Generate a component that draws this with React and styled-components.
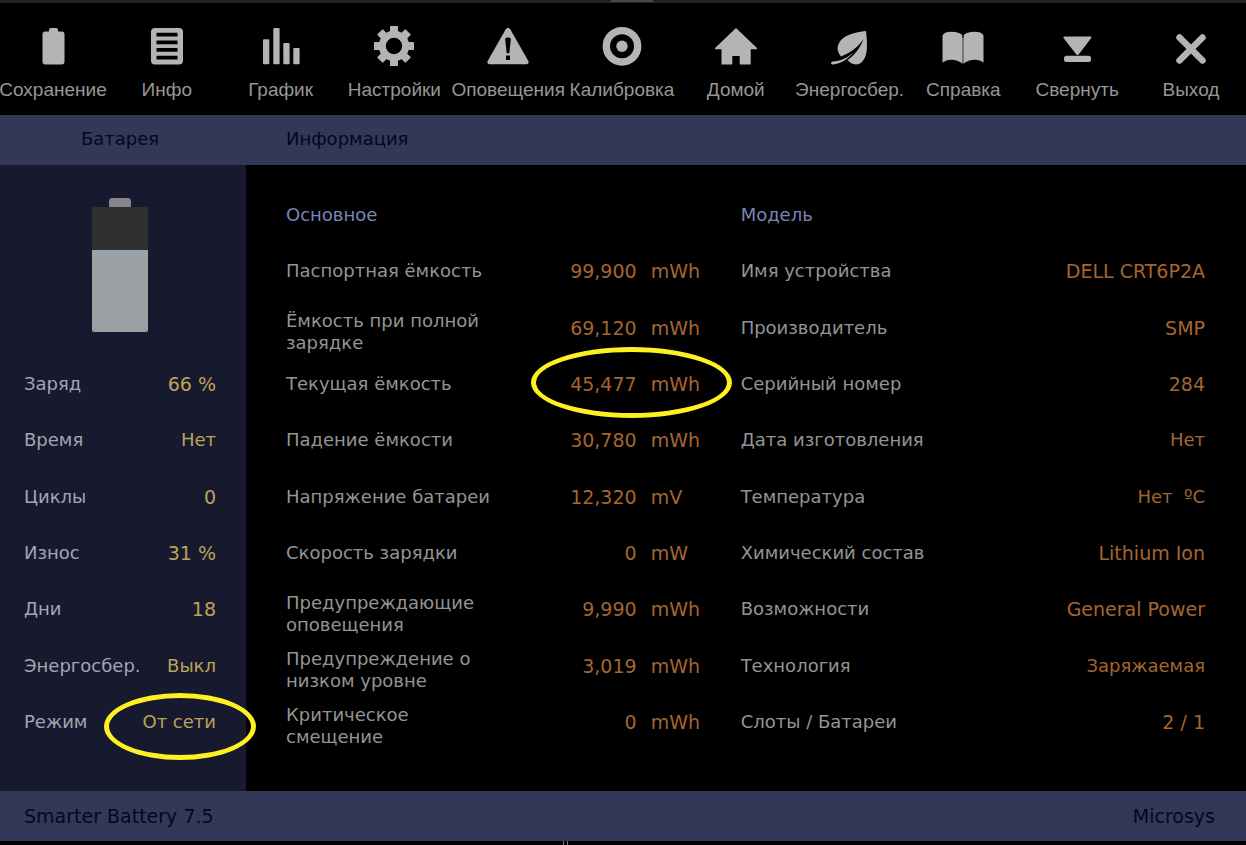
import React from "react";
import styled, { createGlobalStyle } from "styled-components";

const GlobalStyle = createGlobalStyle`
  * { box-sizing: border-box; }
  body {
    margin: 0;
    background: #000;
    color: #949494;
    font-family: "DejaVu Sans", sans-serif;
    font-size: 18px;
    line-height: 22px;
  }
`;

const Page = styled.div`
  display: flex;
  flex-direction: column;
  min-height: 100vh;
`;

const TopEdge = styled.div`
  display: flex;
  justify-content: center;
  height: 3px;
  background: #222;
`;

const Grip = styled.div`
  width: 42px;
  height: 2px;
  margin-left: 18px;
  background: #484848;
`;

const Toolbar = styled.nav`
  display: grid;
  grid-template-columns: repeat(11, 106px);
  justify-content: space-between;
  height: 112px;
  padding: 23px 2px 0 0;
`;

const ToolButton = styled.button`
  display: flex;
  flex-direction: column;
  align-items: center;
  gap: 10px;
  padding: 0;
  border: 0;
  background: none;
  color: #969696;
  font-family: "Liberation Sans", Arial, sans-serif;
  font-size: 19px;
  line-height: 24px;
  white-space: nowrap;
  cursor: pointer;
`;

const Icon = styled.svg`
  flex: none;
  width: 42px;
  height: 42px;
  fill: #b4b4b4;
  stroke: none;
`;

const TitleBar = styled.header`
  display: flex;
  align-items: center;
  height: 50px;
  padding-bottom: 2px;
  background: #333859;
  color: #04071f;
`;

const BarTitle = styled.h1`
  margin: 0;
  font-size: inherit;
  font-weight: 400;
`;

const SideTitle = styled(BarTitle)`
  width: 246px;
  padding: 0 30px 0 24px;
  text-align: center;
`;

const MainTitle = styled(BarTitle)`
  padding-left: 40px;
`;

const Body = styled.div`
  display: flex;
  flex: 1;
`;

const Sidebar = styled.aside`
  display: grid;
  grid-template-rows: 3fr 7fr;
  flex: none;
  width: 246px;
  padding: 22px 30px 41px 24px;
  background: #171a2e;
`;

const BatteryArea = styled.div`
  display: flex;
  flex-direction: column;
  align-items: center;
  padding-top: 11px;
`;

const BatteryCap = styled.div`
  width: 22px;
  height: 9px;
  border-radius: 3px 3px 0 0;
  background: #85838c;
`;

const BatteryShell = styled.div`
  display: flex;
  align-items: flex-end;
  width: 56px;
  height: 125px;
  border-radius: 2px;
  background: #303030;
  overflow: hidden;
`;

const BatteryFill = styled.div`
  width: 100%;
  background: linear-gradient(#97a5ae, #9b9fa1 12px);
`;

const Table = styled.table`
  display: grid;
  flex: ${(p) => p.$grow || 1} 0 0;
  grid-template-rows: ${(p) => (p.$titled ? "1fr 9fr" : "1fr")};
  min-width: 0;
`;

const Caption = styled.caption`
  display: flex;
  align-items: center;
  color: #7884b8;
`;

const Rows = styled.tbody`
  display: grid;
  grid-auto-rows: 1fr;
`;

const Row = styled.tr`
  display: flex;
  align-items: center;
  min-height: 46px;
`;

const Label = styled.th`
  flex: 1 0 0;
  padding: ${(p) => (p.$wrapped ? "9px 0 0" : "0")};
  font-weight: 400;
  text-align: left;
`;

const SideLabel = styled(Label)`
  color: #a3a5b2;
  white-space: nowrap;
`;

const Value = styled.td`
  position: relative;
  padding: 0;
  color: ${(p) => (p.$side ? "#bda258" : "#a5652f")};
  font-size: ${(p) => (p.$word ? 18 : 19)}px;
  text-align: right;
  white-space: pre;
`;

const Amount = styled.span`
  display: inline-block;
`;

const Unit = styled.span`
  display: inline-block;
  width: 50px;
  margin-left: 14px;
  text-align: left;
`;

const Ring = styled.span`
  position: absolute;
  top: ${(p) => p.$top}px;
  right: ${(p) => p.$right}px;
  width: ${(p) => p.$width}px;
  height: ${(p) => p.$height}px;
  border: 5px solid #fff021;
  border-radius: 50%;
  pointer-events: none;
  z-index: 1;
`;

const Main = styled.main`
  display: flex;
  flex: 1;
  gap: 40px;
  padding: 22px 41px 41px 40px;
`;

const LabelBox = styled.div`
  max-width: 220px;
`;

const Footer = styled.footer`
  display: flex;
  align-items: center;
  justify-content: space-between;
  height: 50px;
  padding: 0 31px 1px 24px;
  background: #333859;
  color: #04071f;
  font-size: 19px;
`;

const BottomEdge = styled.div`
  display: flex;
  height: 4px;
  padding-left: 45%;
`;

const Ticks = styled.div`
  width: 5px;
  margin-left: 2px;
  border: solid #777;
  border-width: 0 1px;
`;

const icons = {
  save: (
    <path d="M17 5.5V4a2 2 0 0 1 2-2h5a2 2 0 0 1 2 2v1.5h3.5a3 3 0 0 1 3 3v27a3 3 0 0 1-3 3h-16a3 3 0 0 1-3-3v-27a3 3 0 0 1 3-3z" />
  ),
  info: (
    <path
      fillRule="evenodd"
      d="M9 2h24a4 4 0 0 1 4 4v28.500a4 4 0 0 1-4 4H9a4 4 0 0 1-4-4V6a4 4 0 0 1 4-4zM10.500 6.700v3.800h21V6.700zM10.500 14.400v3.800h21v-3.800zM10.500 22v3.800h21V22zM10.500 29.700v3.800h21v-3.800z"
    />
  ),
  chart: (
    <>
      <rect x="3" y="13.300" width="6.300" height="25" rx="1" />
      <rect x="13.300" y="2" width="6.300" height="36.300" rx="1" />
      <rect x="23.300" y="17" width="6.300" height="21.300" rx="1" />
      <rect x="33.300" y="22" width="6.300" height="16.300" rx="1" />
    </>
  ),
  gear: (
    <>
      <circle cx="21" cy="20" r="11.700" fill="none" stroke="#b4b4b4" strokeWidth="7" />
      {[0, 45, 90, 135, 180, 225, 270, 315].map((a) => (
        <path key={a} transform={`rotate(${a} 21 20)`} d="M17.500 0q-.5 0-.5.500V8h8V.5q0-.5-.5-.5z" />
      ))}
    </>
  ),
  alert: (
    <path
      fillRule="evenodd"
      d="M18.700 3.300q2.300-3 4.600 0L41.300 35q1.200 3.300-1.800 3.300h-37q-3 0-1.800-3.300zM18.200 13.500q0-2 1.800-2h2q1.800 0 1.800 2L22.300 27.300h-2.600zM19 29.500h4V34h-4z"
    />
  ),
  target: (
    <>
      <circle cx="21" cy="20.300" r="15.700" fill="none" stroke="#b4b4b4" strokeWidth="7.400" />
      <circle cx="21" cy="20.300" r="5.700" />
    </>
  ),
  home: <path d="M21 2 42 22v1.200h-6.300v15.300H24.700V30h-7.400v8.500H6.500V23.200H0V22z" />,
  leaf: (
    <>
      <path d="M37 5C26 6 14 9 10 17c-2.500 5-1.500 9 2 13.500C21 27 28.500 22 34.500 13 31 23 25 29.500 18.500 34c3 4 8 5.500 12.500 3.500C39.500 32 38.500 19 37 5z" />
      <path d="M3.500 35.500C11 35.500 19 31.500 25 26 19 33 11.500 38 4 38.500c-2.500 0-2.500-2.500-.5-3z" />
    </>
  ),
  book: (
    <>
      <path d="M.5 9.500Q2 5.700 9 5.700q9 0 11.300 3.500v28.300Q16 33.700 9 33.700q-5 0-8.500 3z" />
      <path d="M41.500 9.500Q40 5.700 33 5.700q-9 0-11.300 3.500v28.300Q26 33.700 33 33.700q5 0 8.500 3z" />
      <path d="M20 12h2v24l-1 2.500-1-2.500z" fill="#777" />
    </>
  ),
  minimize: (
    <>
      <path d="M8 10.500h27q.8.500.2 1.500L23 28q-1.500 2-3 0L7.500 12Q7 11 8 10.500z" />
      <rect x="8" y="29.800" width="27" height="6.200" rx="2.500" />
    </>
  ),
  close: (
    <path d="m9.500 11.500 23 23m0-23-23 23" fill="none" stroke="#b4b4b4" strokeWidth="6.500" strokeLinecap="round" />
  ),
};

const tools = [
  ["save", "Сохранение"],
  ["info", "Инфо"],
  ["chart", "График"],
  ["gear", "Настройки"],
  ["alert", "Оповещения"],
  ["target", "Калибровка"],
  ["home", "Домой"],
  ["leaf", "Энергосбер."],
  ["book", "Справка"],
  ["minimize", "Свернуть"],
  ["close", "Выход"],
];

const status = [
  { label: "Заряд", value: "66 %" },
  { label: "Время", value: "Нет", word: true },
  { label: "Циклы", value: "0" },
  { label: "Износ", value: "31 %" },
  { label: "Дни", value: "18" },
  { label: "Энергосбер.", value: "Выкл", word: true },
  {
    label: "Режим",
    value: "От сети",
    word: true,
    ring: { $top: -18, $right: -40, $width: 152, $height: 67 },
  },
];

const general = [
  { label: "Паспортная ёмкость", amount: "99,900", unit: "mWh" },
  { label: "Ёмкость при полной зарядке", amount: "69,120", unit: "mWh", wrapped: true },
  {
    label: "Текущая ёмкость",
    amount: "45,477",
    unit: "mWh",
    ring: { $top: -26, $right: -31, $width: 201, $height: 71 },
  },
  { label: "Падение ёмкости", amount: "30,780", unit: "mWh" },
  { label: "Напряжение батареи", amount: "12,320", unit: "mV" },
  { label: "Скорость зарядки", amount: "0", unit: "mW" },
  { label: "Предупреждающие оповещения", amount: "9,990", unit: "mWh", wrapped: true },
  { label: "Предупреждение о низком уровне", amount: "3,019", unit: "mWh", wrapped: true },
  { label: "Критическое смещение", amount: "0", unit: "mWh", wrapped: true },
];

const model = [
  { label: "Имя устройства", value: "DELL CRT6P2A" },
  { label: "Производитель", value: "SMP" },
  { label: "Серийный номер", value: "284" },
  { label: "Дата изготовления", value: "Нет", word: true },
  { label: "Температура", value: "Нет  ºC", word: true },
  { label: "Химический состав", value: "Lithium Ion" },
  { label: "Возможности", value: "General Power" },
  { label: "Технология", value: "Заряжаемая", word: true },
  { label: "Слоты / Батареи", value: "2 / 1" },
];

function Battery({ charge }) {
  return (
    <BatteryArea>
      <BatteryCap />
      <BatteryShell>
        <BatteryFill style={{ height: `${charge}%` }} />
      </BatteryShell>
    </BatteryArea>
  );
}

export default function App() {
  return (
    <Page>
      <GlobalStyle />
      <TopEdge>
        <Grip />
      </TopEdge>
      <Toolbar>
        {tools.map(([icon, text]) => (
          <ToolButton key={icon} type="button">
            <Icon viewBox="0 0 42 42" aria-hidden="true">
              {icons[icon]}
            </Icon>
            {text}
          </ToolButton>
        ))}
      </Toolbar>
      <TitleBar>
        <SideTitle>Батарея</SideTitle>
        <MainTitle as="h2">Информация</MainTitle>
      </TitleBar>
      <Body>
        <Sidebar>
          <Battery charge={66} />
          <Table>
            <Rows>
              {status.map(({ label, value, word, ring }) => (
                <Row key={label}>
                  <SideLabel scope="row">{label}</SideLabel>
                  <Value $side $word={word}>
                    {value}
                    {ring && <Ring {...ring} />}
                  </Value>
                </Row>
              ))}
            </Rows>
          </Table>
        </Sidebar>
        <Main>
          <Table $titled>
            <Caption>Основное</Caption>
            <Rows>
              {general.map(({ label, amount, unit, wrapped, ring }) => (
                <Row key={label}>
                  <Label scope="row" $wrapped={wrapped}>
                    <LabelBox>{label}</LabelBox>
                  </Label>
                  <Value>
                    <Amount>{amount}</Amount>
                    <Unit>{unit}</Unit>
                    {ring && <Ring {...ring} />}
                  </Value>
                </Row>
              ))}
            </Rows>
          </Table>
          <Table $titled $grow={1.12}>
            <Caption>Модель</Caption>
            <Rows>
              {model.map(({ label, value, word }) => (
                <Row key={label}>
                  <Label scope="row">{label}</Label>
                  <Value $word={word}>{value}</Value>
                </Row>
              ))}
            </Rows>
          </Table>
        </Main>
      </Body>
      <Footer>
        <span>Smarter Battery 7.5</span>
        <span>Microsys</span>
      </Footer>
      <BottomEdge>
        <Ticks />
      </BottomEdge>
    </Page>
  );
}
